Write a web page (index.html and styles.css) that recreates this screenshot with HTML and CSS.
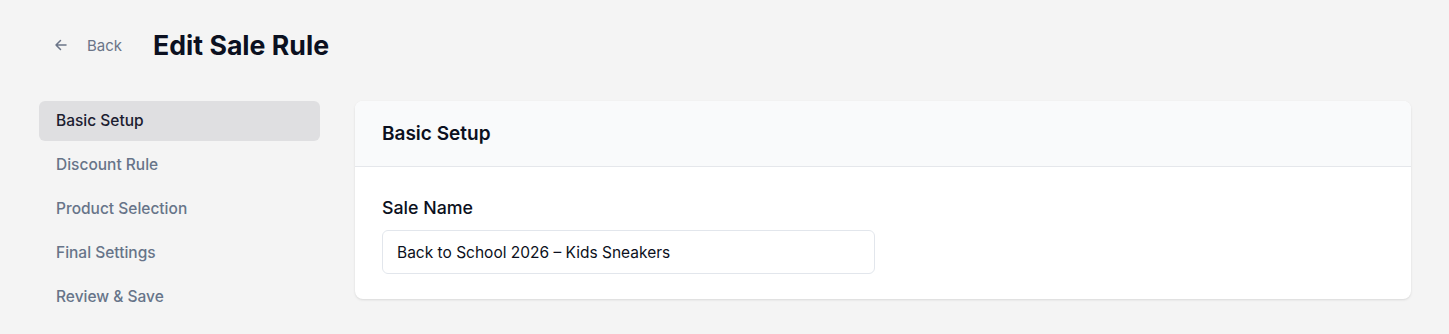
FILE: index.html
```html
<!DOCTYPE html>
<html>
<head>
<meta charset="utf-8">
<link rel="stylesheet" href="styles.css">
</head>
<body>
<div class="page">
  <header class="topbar">
    <a class="back" href="#">
      <svg class="back-icon" width="16" height="16" viewBox="0 0 16 16" fill="none" stroke="currentColor" stroke-width="1.5" stroke-linecap="round" stroke-linejoin="round"><path d="M13 8H3M7.5 3.5L3 8l4.5 4.5"/></svg>
      <span>Back</span>
    </a>
    <h1 class="title">Edit Sale Rule</h1>
  </header>
  <div class="main">
    <nav class="sidebar">
      <div class="nav-item active">Basic Setup</div>
      <div class="nav-item">Discount Rule</div>
      <div class="nav-item">Product Selection</div>
      <div class="nav-item">Final Settings</div>
      <div class="nav-item">Review &amp; Save</div>
    </nav>
    <section class="card">
      <div class="card-header">Basic Setup</div>
      <div class="card-body">
        <label class="field-label">Sale Name</label>
        <div class="input">Back to School 2026 – Kids Sneakers</div>
      </div>
    </section>
  </div>
</div>
</body>
</html>
```
FILE: styles.css
```css
* { box-sizing: border-box; }
html, body { margin: 0; padding: 0; }
body {
  background: #f4f4f4;
  font-family: Inter, "Noto Sans", sans-serif;
  color: #0f172a;
  width: 1449px;
  height: 334px;
  overflow: hidden;
}
.page {
  padding: 25px 38px 0 39px;
}
.topbar {
  display: flex;
  align-items: center;
  height: 40px;
  padding-left: 14px;
}
.back {
  display: flex;
  align-items: center;
  gap: 18px;
  color: #6b7588;
  text-decoration: none;
  font-size: 15px;
}
.back-icon { display: block; }
.title {
  margin: 0 0 0 31px;
  font-size: 26.7px;
  font-weight: 700;
  color: #0b1020;
}
.main {
  display: flex;
  gap: 35px;
  margin-top: 36px;
}
.sidebar {
  width: 281px;
  display: flex;
  flex-direction: column;
  gap: 4px;
}
.nav-item {
  height: 40px;
  display: flex;
  align-items: center;
  padding-left: 17px;
  padding-bottom: 1px;
  font-size: 15.5px;
  font-weight: 500;
  color: #677489;
  border-radius: 6px;
}
.nav-item.active {
  background: #dfdfe1;
  color: #1b2030;
}
.card {
  flex: 1;
  background: #fff;
  border-radius: 8px;
  box-shadow: 0 1px 3px rgba(0,0,0,0.08), 0 1px 2px rgba(0,0,0,0.04);
  overflow: hidden;
  height: 198px;
}
.card-header {
  height: 66px;
  display: flex;
  align-items: center;
  padding-left: 27px;
  background: #f9fafb;
  border-bottom: 1px solid #e5e7eb;
  font-size: 19px;
  font-weight: 600;
  color: #0b1020;
  padding-bottom: 1px;
}
.card-body {
  padding: 29px 27px 25px;
}
.field-label {
  display: block;
  font-size: 17.8px;
  font-weight: 450;
  line-height: 24px;
  color: #0b1020;
  margin-bottom: 10px;
}
.input {
  width: 493px;
  height: 44px;
  border: 1px solid #e2e6ec;
  border-radius: 6px;
  display: flex;
  align-items: center;
  padding-left: 14px;
  font-size: 15.5px;
  color: #0b1020;
}
```
